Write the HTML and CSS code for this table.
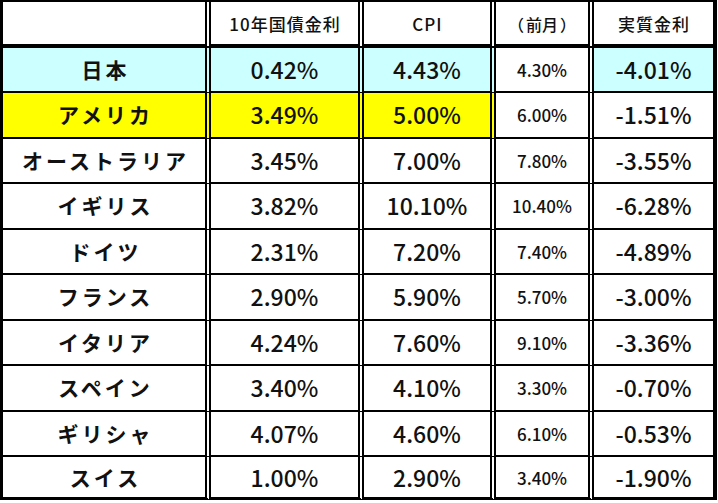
FILE: index.html
```html
<!DOCTYPE html>
<html lang="ja">
<head>
<meta charset="utf-8">
<title>実質金利</title>
<link rel="stylesheet" href="styles.css">
</head>
<body>
<div class="table">
  <div class="cell head"></div>
  <div class="cell head"><span class="ht">10年国債金利</span></div>
  <div class="cell head"><span class="ht">CPI</span></div>
  <div class="cell head"><span class="hs"><span class="pl">（</span>前月<span class="pr">）</span></span></div>
  <div class="cell head end"><span class="ht">実質金利</span></div>

  <div class="cell name blue">日本</div>
  <div class="cell num blue">0.42%</div>
  <div class="cell num blue">4.43%</div>
  <div class="cell sub">4.30%</div>
  <div class="cell num blue end">-4.01%</div>

  <div class="cell name yellow">アメリカ</div>
  <div class="cell num yellow">3.49%</div>
  <div class="cell num yellow">5.00%</div>
  <div class="cell sub">6.00%</div>
  <div class="cell num end">-1.51%</div>

  <div class="cell name">オーストラリア</div>
  <div class="cell num">3.45%</div>
  <div class="cell num">7.00%</div>
  <div class="cell sub">7.80%</div>
  <div class="cell num end">-3.55%</div>

  <div class="cell name">イギリス</div>
  <div class="cell num">3.82%</div>
  <div class="cell num">10.10%</div>
  <div class="cell sub">10.40%</div>
  <div class="cell num end">-6.28%</div>

  <div class="cell name">ドイツ</div>
  <div class="cell num">2.31%</div>
  <div class="cell num">7.20%</div>
  <div class="cell sub">7.40%</div>
  <div class="cell num end">-4.89%</div>

  <div class="cell name">フランス</div>
  <div class="cell num">2.90%</div>
  <div class="cell num">5.90%</div>
  <div class="cell sub">5.70%</div>
  <div class="cell num end">-3.00%</div>

  <div class="cell name">イタリア</div>
  <div class="cell num">4.24%</div>
  <div class="cell num">7.60%</div>
  <div class="cell sub">9.10%</div>
  <div class="cell num end">-3.36%</div>

  <div class="cell name">スペイン</div>
  <div class="cell num">3.40%</div>
  <div class="cell num">4.10%</div>
  <div class="cell sub">3.30%</div>
  <div class="cell num end">-0.70%</div>

  <div class="cell name">ギリシャ</div>
  <div class="cell num">4.07%</div>
  <div class="cell num">4.60%</div>
  <div class="cell sub">6.10%</div>
  <div class="cell num end">-0.53%</div>

  <div class="cell name last">スイス</div>
  <div class="cell num last">1.00%</div>
  <div class="cell num last">2.90%</div>
  <div class="cell sub last">3.40%</div>
  <div class="cell num end last">-1.90%</div>
</div>
</body>
</html>
```

FILE: styles.css
```css
html, body {
  margin: 0;
  padding: 0;
  background: #ffffff;
}

body {
  font-family: "Noto Sans CJK JP", "Noto Sans", sans-serif;
  color: #111111;
}

.table {
  display: grid;
  grid-template-columns: 208px 153px 132px 98px 123px;
  grid-template-rows: 46px 45px repeat(8, 45.5px) 43px;
  width: 714px;
  border-left: 3px solid #000;
  border-top: 2px solid #000;
}

.cell {
  box-sizing: border-box;
  display: flex;
  align-items: center;
  justify-content: center;
  border-right: 6px double #000;
  border-bottom: 2px solid #000;
  background: #ffffff;
  white-space: nowrap;
  line-height: 1;
}

.cell.end {
  border-right: 4px solid #000;
}

.cell.head {
  border-bottom: 4px solid #000;
}

.cell.last {
  border-bottom: 3px solid #000;
}

.blue {
  background: #ccffff;
}

.yellow {
  background: #ffff00;
}

.ht {
  font-size: 17px;
  font-weight: 500;
  letter-spacing: 1px;
  padding-left: 1px;
  padding-top: 1px;
}

.hs {
  font-size: 16px;
  font-weight: 500;
  padding-top: 1px;
  white-space: nowrap;
}

.pl,
.pr {
  display: inline-block;
  width: 1em;
}

.pl {
  margin-right: 2px;
}

.pr {
  margin-left: 2px;
}

.name {
  font-size: 21px;
  font-weight: 700;
  letter-spacing: 3px;
  padding-left: 3px;
}

.num {
  font-size: 23px;
  font-weight: 500;
}

.sub {
  font-size: 17px;
  font-weight: 500;
}
```
